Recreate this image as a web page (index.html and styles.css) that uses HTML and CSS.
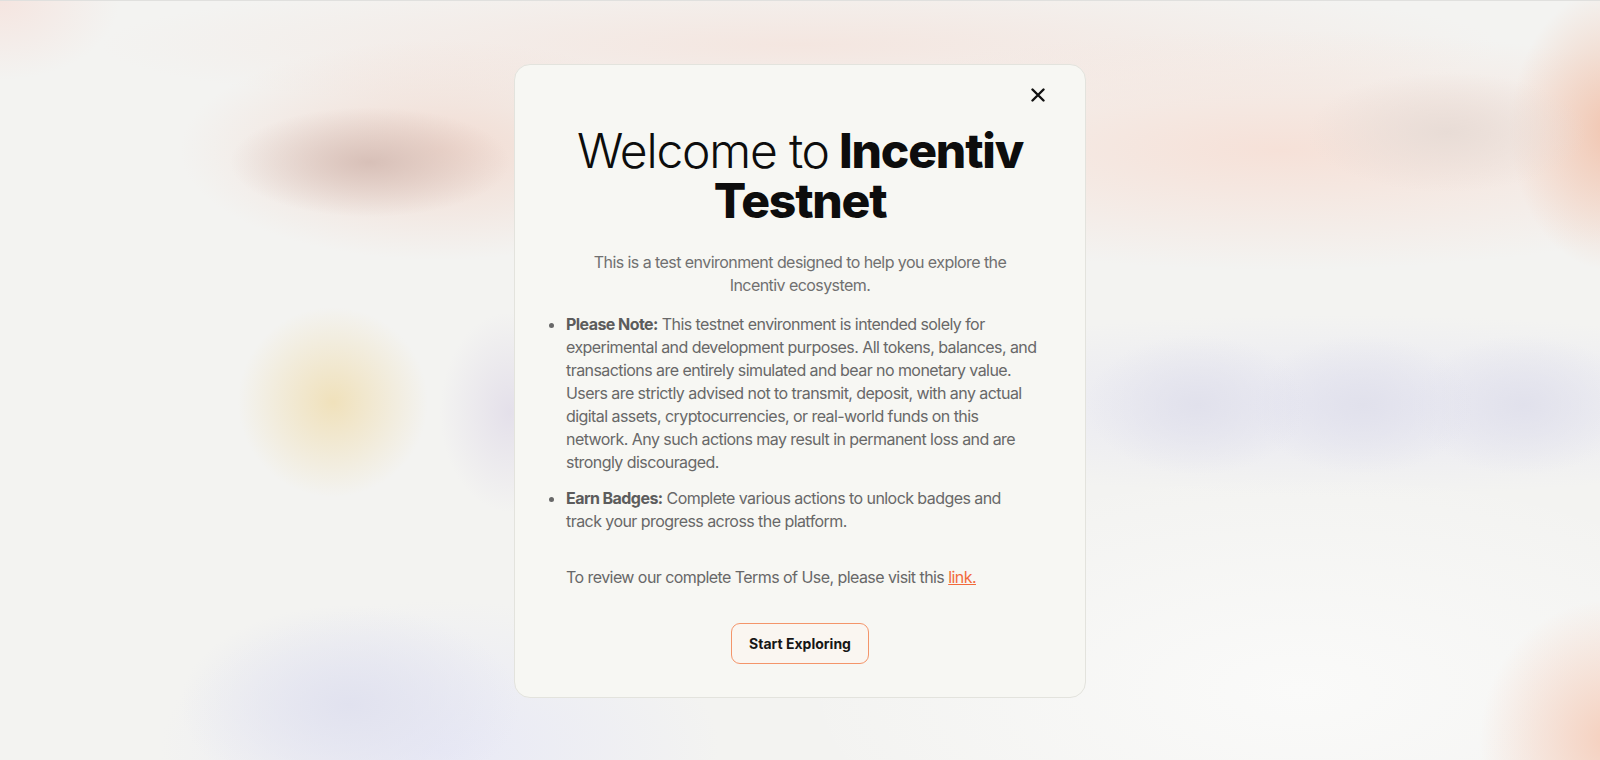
FILE: index.html
```html
<!DOCTYPE html>
<html lang="en">
<head>
  <meta charset="UTF-8" />
  <meta name="viewport" content="width=device-width, initial-scale=1.0" />
  <title>Incentiv Testnet</title>
  <link rel="stylesheet" href="styles.css">
</head>
<body>

  <div class="modal">
    <div class="modal-head">
      <button class="close-btn" aria-label="Close">
        <svg width="14" height="14" viewBox="0 0 14 14">
          <path d="M1.5 1.5 L12.5 12.5 M12.5 1.5 L1.5 12.5" stroke="#111" stroke-width="2.4" stroke-linecap="round" fill="none" />
        </svg>
      </button>
    </div>

    <h1><span class="light">Welcome to</span> <strong>Incentiv Testnet</strong></h1>

    <p class="intro">This is a test environment designed to help you explore the Incentiv ecosystem.</p>

    <ul class="notes">
      <li><strong>Please Note:</strong> This testnet environment is intended solely for experimental and development purposes. All tokens, balances, and transactions are entirely simulated and bear no monetary value. Users are strictly advised not to transmit, deposit, with any actual digital assets, cryptocurrencies, or real-world funds on this network. Any such actions may result in permanent loss and are strongly discouraged.</li>
      <li><strong>Earn Badges:</strong> Complete various actions to unlock badges and track your progress across the platform.</li>
    </ul>

    <p class="terms">To review our complete Terms of Use, please visit this <a href="#">link.</a></p>

    <div class="actions">
      <button class="start-btn">Start Exploring</button>
    </div>
  </div>

</body>
</html>
```

FILE: styles.css
```css
* { box-sizing: border-box; }

html, body { height: 100%; }

body {
  margin: 0;
  border-top: 1px solid #e0e0de;
  font-family: Inter, "Noto Sans", sans-serif;
  color: #686868;
  display: flex;
  align-items: center;
  justify-content: center;
  background:
    radial-gradient(ellipse 140px 55px at 370px 162px, rgba(214, 190, 182, 0.95), rgba(214, 190, 182, 0)),
    radial-gradient(ellipse 260px 110px at 440px 150px, #f2dbd1, rgba(242, 219, 209, 0)),
    radial-gradient(ellipse 140px 60px at 1447px 132px, #e8dcd6, rgba(232, 220, 214, 0)),
    radial-gradient(ellipse 100px 140px at 1610px 130px, #f1c6b1, rgba(241, 198, 177, 0)),
    radial-gradient(ellipse 520px 120px at 1280px 150px, #f6e1d8, rgba(246, 225, 216, 0)),
    radial-gradient(ellipse 700px 70px at 800px 45px, #f4e6e0, rgba(244, 230, 224, 0)),
    radial-gradient(circle 95px at 333px 402px, #f0e1bb, rgba(240, 225, 187, 0)),
    radial-gradient(ellipse 70px 100px at 510px 412px, #e4e0ea, rgba(228, 224, 234, 0)),
    radial-gradient(ellipse 110px 70px at 1197px 405px, #e1e1ec, rgba(225, 225, 236, 0)),
    radial-gradient(ellipse 110px 70px at 1363px 405px, #e1e1ec, rgba(225, 225, 236, 0)),
    radial-gradient(ellipse 110px 70px at 1523px 405px, #e1e1ec, rgba(225, 225, 236, 0)),
    radial-gradient(ellipse 560px 90px at 1340px 405px, #e8e8f2, rgba(232, 232, 242, 0)),
    radial-gradient(ellipse 170px 100px at 350px 705px, #e1e2ef, rgba(225, 226, 239, 0)),
    radial-gradient(ellipse 280px 150px at 440px 750px, #e8e9f6, rgba(232, 233, 246, 0)),
    radial-gradient(ellipse 130px 140px at 1610px 740px, #f5cfbd, rgba(245, 207, 189, 0)),
    radial-gradient(ellipse 120px 80px at 0 0, #f5e5e0, rgba(245, 229, 224, 0)),
    radial-gradient(ellipse 500px 220px at 1300px 690px, #fafaf9, rgba(250, 250, 249, 0)),
    #f3f3f1;
}

.modal {
  width: 572px;
  background: #f7f7f3;
  border: 1px solid #e3e3dd;
  border-radius: 16px;
  padding: 19px 36px 33px;
}

.modal-head { display: flex; justify-content: flex-end; }

.close-btn {
  width: 22px;
  height: 22px;
  padding: 0;
  border: none;
  background: none;
  display: flex;
  align-items: center;
  justify-content: center;
  cursor: pointer;
}

h1 {
  margin: 20px 0 0;
  font-size: 48px;
  line-height: 50px;
  letter-spacing: -0.025em;
  text-align: center;
  color: #0d0d0d;
}
h1 .light { font-weight: 300; }
h1 strong { font-weight: 800; }

.intro {
  max-width: 430px;
  margin: 25px auto 0;
  font-size: 16px;
  line-height: 23px;
  letter-spacing: -0.035em;
  text-align: center;
  color: #707070;
}

.notes {
  margin: 16px 11px 0 0;
  padding-left: 15px;
  font-size: 16px;
  line-height: 23px;
  letter-spacing: -0.035em;
}
.notes li + li { margin-top: 13px; }
.notes strong { color: #5c5c5c; font-weight: 700; }

.terms {
  margin: 33px 0 0;
  padding-left: 15px;
  font-size: 16px;
  line-height: 23px;
  letter-spacing: -0.035em;
}
.terms a { color: #f26a3b; }

.actions { margin-top: 34px; display: flex; justify-content: center; }

.start-btn {
  height: 41px;
  padding: 0 17px;
  font-family: Inter, "Noto Sans", sans-serif;
  font-size: 14px;
  font-weight: 700;
  color: #161616;
  background: #faf6f1;
  border: 1.5px solid #f4956a;
  border-radius: 9px;
  cursor: pointer;
}
```
